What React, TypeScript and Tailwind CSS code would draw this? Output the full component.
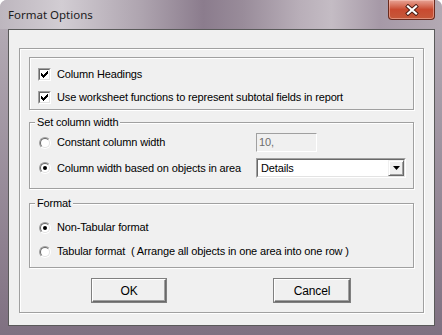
import React from "react";

const CHECK = ["......x", ".....xx", "x...xxx", "xx.xxx.", "xxxxx..", ".xxx...", "..x...."];

const CheckMark = () => (
	<svg width="7" height="7" viewBox="0 0 7 7" shapeRendering="crispEdges">
		{CHECK.map((row, y) =>
			row.split("").map((c, x) => (c === "x" ? <rect key={`${x}-${y}`} x={x} y={y} width="1" height="1" fill="#000" /> : null))
		)}
	</svg>
);

const CheckBox = ({ label }: { label: string }) => (
	<div className="flex items-center h-[13px]">
		<div className="w-[13px] h-[13px] shrink-0 border border-t-[#a0a0a0] border-l-[#a0a0a0] border-r-white border-b-white">
			<div className="w-full h-full flex items-center justify-center bg-white border border-t-[#696969] border-l-[#696969] border-r-[#e3e3e3] border-b-[#e3e3e3]">
				<CheckMark />
			</div>
		</div>
		<span className="ml-[6px] leading-[13px] whitespace-nowrap">{label}</span>
	</div>
);

const Radio = ({ label, checked }: { label: string; checked?: boolean }) => (
	<div className="flex items-center h-[13px]">
		<div className="w-[12px] h-[12px] shrink-0 rounded-full border border-t-[#a0a0a0] border-l-[#a0a0a0] border-r-white border-b-white">
			<div className="w-full h-full rounded-full flex items-center justify-center bg-white border border-t-[#696969] border-l-[#696969] border-r-[#e3e3e3] border-b-[#e3e3e3]">
				{checked && <div className="w-[4px] h-[4px] rounded-full bg-black" />}
			</div>
		</div>
		<span className="ml-[6px] leading-[13px] whitespace-pre">{label}</span>
	</div>
);

const Group = ({ title, className, children }: { title?: string; className?: string; children: React.ReactNode }) => (
	<div className={`border border-[#a0a0a0] shadow-[inset_1px_1px_0_#fff,1px_1px_0_#fff] ${className ?? ""}`}>
		{title && <div className="-mt-[7px] ml-[5px] w-fit px-[2px] h-[13px] leading-[13px] bg-[#f0f0f0]">{title}</div>}
		{children}
	</div>
);

const Button = ({ label, className }: { label: string; className?: string }) => (
	<button className={`h-[23px] bg-[#f0f0f0] text-[12px] border border-t-white border-l-white border-r-[#696969] border-b-[#696969] shadow-[inset_-1px_-1px_0_#a0a0a0] outline outline-[#808080] ${className ?? ""}`}>
		{label}
	</button>
);

export default function App() {
	return (
		<div className="w-[442px] h-[335px] overflow-hidden rounded-t-[7px] bg-linear-to-b from-[#b7afb8] to-[#7f7081] flex flex-col text-[11px] tracking-[-0.15px] text-black font-['Liberation_Sans',Arial,sans-serif]">
			{/* title bar */}
			<div className="h-[29px] shrink-0 flex items-start tracking-normal bg-[linear-gradient(90deg,#bdb6be_0%,#d2cdd3_14%,#aea4af_32%,#8b7c8d_46%,#998c9a_55%,#b9afb9_68%,#c4bcc4_75%,#a699a7_86%,#b3a9b3_100%)]">
				<span className="ml-[8px] mt-[6px] text-[11.5px] text-[#1b1b1b] font-['Noto_Sans',sans-serif]">Format Options</span>
				<button className="ml-auto mr-[7px] w-[47px] h-[20px] flex items-center justify-center rounded-b-[4px] border border-t-0 border-[#6a2a1e] bg-linear-to-b from-[#e7a395] via-[#c94a30] to-[#c5583a] shadow-[inset_0_0_0_1px_rgba(255,210,200,0.45)]">
					<svg width="14" height="12" viewBox="0 0 14 12">
						<path d="M3 2.5 L11 9.5 M11 2.5 L3 9.5" stroke="#4a1a12" strokeWidth="4" strokeLinecap="square" />
						<path d="M3 2.5 L11 9.5 M11 2.5 L3 9.5" stroke="#fff" strokeWidth="2.2" strokeLinecap="square" />
					</svg>
				</button>
			</div>

			{/* client area */}
			<div className="ml-[8px] w-[427px] h-[297px] border border-[#5a5a5a] bg-[#f0f0f0] pt-[18px] pl-[10px]">
				<div className="w-[405px] h-[265px] border border-[#a0a0a0] shadow-[inset_1px_1px_0_#fff,1px_1px_0_#fff] pt-[8px] px-[9px] flex flex-col">
					<Group className="h-[53px] pt-[10px] pl-[8px] flex flex-col gap-[10px]">
						<CheckBox label="Column Headings" />
						<CheckBox label="Use worksheet functions to represent subtotal fields in report" />
					</Group>

					<Group title="Set column width" className="mt-[12px] h-[67px]">
						<div className="grid grid-cols-[217px_1fr] pl-[9px] pt-[4px] gap-y-[6px]">
							<div className="h-[19px] flex items-center">
								<Radio label="Constant column width" />
							</div>
							<div className="w-[61px] h-[19px] border border-t-[#a0a0a0] border-l-[#a0a0a0] border-r-white border-b-white bg-[#f0f0f0] pl-[2px] leading-[17px] text-[#6d6d6d]">
								10,
							</div>
							<div className="h-[20px] flex items-center">
								<Radio label="Column width based on objects in area" checked />
							</div>
							<div className="w-[150px] h-[20px] border border-t-[#a0a0a0] border-l-[#a0a0a0] border-r-white border-b-white">
								<div className="h-full flex bg-white border border-t-[#696969] border-l-[#696969] border-r-[#e3e3e3] border-b-[#e3e3e3]">
									<span className="flex-1 pl-[3px] leading-[16px]">Details</span>
									<div className="w-[16px] h-[16px] flex items-center justify-center bg-[#f0f0f0] border border-t-[#f0f0f0] border-l-[#f0f0f0] border-r-[#696969] border-b-[#696969] shadow-[inset_1px_1px_0_#fff,inset_-1px_-1px_0_#a0a0a0]">
										<svg width="7" height="4" viewBox="0 0 7 4">
											<path d="M0 0 H7 L3.5 4 Z" fill="#000" />
										</svg>
									</div>
								</div>
							</div>
						</div>
					</Group>

					<Group title="Format" className="mt-[14px] h-[65px]">
						<div className="pl-[9px] pt-[11px] flex flex-col gap-[11px]">
							<Radio label="Non-Tabular format" checked />
							<Radio label="Tabular format  ( Arrange all objects in one area into one row )" />
						</div>
					</Group>

					<div className="mt-[11px] flex pl-[63px]">
						<Button label="OK" className="w-[74px]" />
						<Button label="Cancel" className="w-[76px] ml-[108px]" />
					</div>
				</div>
			</div>
		</div>
	);
}
